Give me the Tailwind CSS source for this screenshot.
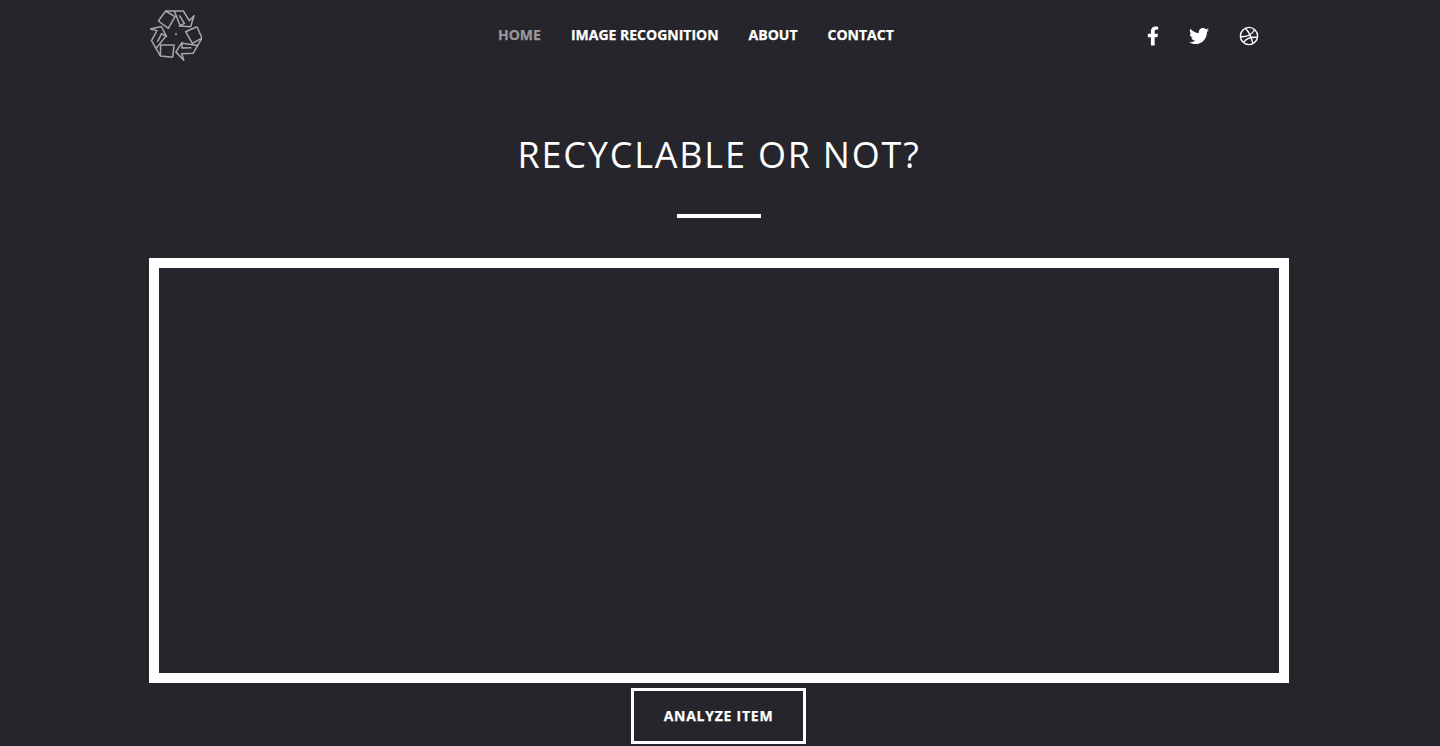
<!DOCTYPE html>
<html lang="en">
<head>
  <meta charset="UTF-8" />
  <meta name="viewport" content="width=device-width, initial-scale=1.0" />
  <title>Recyclable or not?</title>
  <script src="https://cdn.jsdelivr.net/npm/@tailwindcss/browser@4"></script>
</head>
<body class="h-[746px] overflow-hidden bg-[#25252b] font-['Open_Sans',sans-serif] text-white">
  <div class="w-[1140px] ml-[149px]">
    <header class="flex h-[70px] items-start">
      <!-- recycling logo: one folded arrow, turned three times round the centre -->
      <svg class="mt-[10px] ml-px shrink-0" width="52" height="52" viewBox="30 30 156 156" fill="none" stroke="#a8a8ac" stroke-width="4.5" stroke-linejoin="round">
        <g>
          <path d="M55 63 77 33H130L148 62 162 47 152 80 118 78 133 70 118 46"/>
          <path d="M103 33 120 76M55 63 85 85 105 50 77 33"/>
        </g>
        <g transform="rotate(120 108 105)">
          <path d="M55 63 77 33H130L148 62 162 47 152 80 118 78 133 70 118 46"/>
          <path d="M103 33 120 76M55 63 85 85 105 50 77 33"/>
        </g>
        <g transform="rotate(240 108 105)">
          <path d="M55 63 77 33H130L148 62 162 47 152 80 118 78 133 70 118 46"/>
          <path d="M103 33 120 76M55 63 85 85 105 50 77 33"/>
        </g>
        <circle cx="108" cy="103" r="3" fill="#a8a8ac" stroke="none"/>
      </svg>
      <nav class="ml-[296px] mt-[25px] flex gap-[30px] text-[14px] leading-[20px] font-bold uppercase [-webkit-text-stroke:0.25px_currentColor]">
        <a href="#" class="text-[#999]">Home</a>
        <a href="#">Image Recognition</a>
        <a href="#">About</a>
        <a href="#">Contact</a>
      </nav>
      <div class="ml-auto mr-[30px] mt-[26px] flex items-center">
        <svg class="mr-[-3px] ml-[3px] w-[12px] h-[20px]" viewBox="0 0 320 512" fill="#fff"><path d="M279.14 288l14.22-92.66h-88.91v-60.13c0-25.35 12.42-50.06 52.24-50.06h40.42V6.26S260.43 0 225.36 0c-73.22 0-121.08 44.38-121.08 124.72v70.62H22.89V288h81.39v224h100.17V288z"/></svg>
        <svg class="ml-[33px] w-[20px] h-[20px]" viewBox="0 0 512 512" fill="#fff"><path d="M459.37 151.716c.325 4.548.325 9.097.325 13.645 0 138.72-105.583 298.558-298.558 298.558-59.452 0-114.68-17.219-161.137-47.106 8.447.974 16.568 1.299 25.34 1.299 49.055 0 94.213-16.568 130.274-44.832-46.132-.975-84.792-31.188-98.112-72.772 6.498.974 12.995 1.624 19.818 1.624 9.421 0 18.843-1.3 27.614-3.573-48.081-9.747-84.143-51.98-84.143-102.985v-1.299c13.969 7.797 30.214 12.67 47.431 13.319-28.264-18.843-46.781-51.005-46.781-87.391 0-19.492 5.197-37.36 14.294-52.954 51.655 63.675 129.3 105.258 216.365 109.807-1.624-7.797-2.599-15.918-2.599-24.04 0-57.828 46.782-104.934 104.934-104.934 30.213 0 57.502 12.67 76.67 33.137 23.715-4.548 46.456-13.32 66.599-25.34-7.798 24.366-24.366 44.833-46.132 57.827 21.117-2.273 41.584-8.122 60.426-16.243-14.292 20.791-32.161 39.308-52.628 54.253z"/></svg>
        <svg class="ml-[30px] w-[20px] h-[20px]" viewBox="0 0 20 20" fill="none" stroke="#fff" stroke-width="1.4"><circle cx="10" cy="10" r="8.6"/><path d="M6.5 2.2C9.5 5.5 12 9.5 14 17.6M1.6 10.8C7 11 12.5 9 15.6 4M4.6 16.5C7 12.6 11 10.5 18.4 11.4"/></svg>
      </div>
    </header>
    <h1 class="mt-[60px] text-center text-[36px] leading-[49px] font-normal uppercase tracking-[1.8px]">Recyclable or not?</h1>
    <div class="mx-auto mt-[35px] h-1 w-[84px] bg-white"></div>
    <div class="mt-[40px] h-[425px] border-[10px] border-white"></div>
    <div class="mt-[5px] flex justify-center pr-[2px]">
      <button class="h-[56px] w-[175px] border-[3px] border-white pb-[2px] pl-px text-[14px] font-bold uppercase tracking-[0.75px] [-webkit-text-stroke:0.25px_currentColor]">Analyze Item</button>
    </div>
  </div>
</body>
</html>
